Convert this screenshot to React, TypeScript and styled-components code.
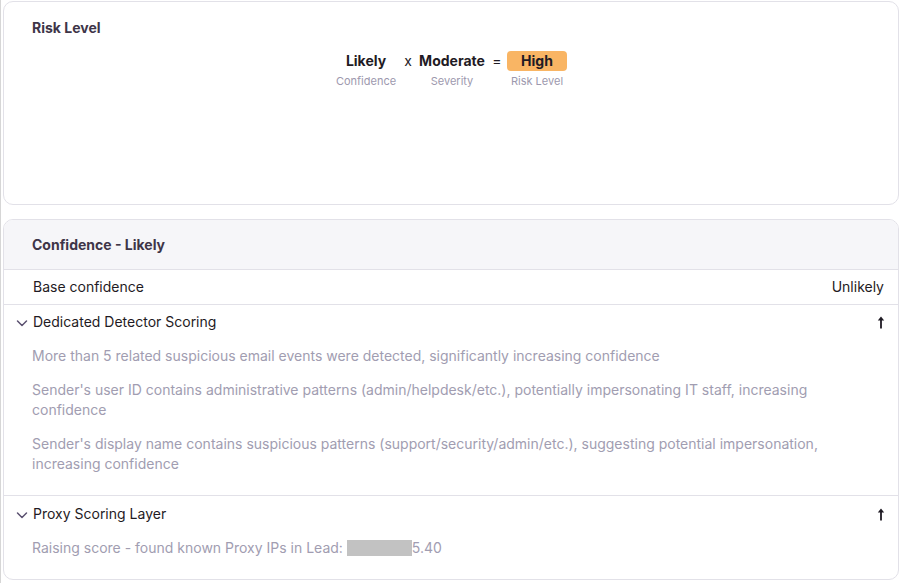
import React from "react";
import styled, { createGlobalStyle } from "styled-components";

const GlobalStyle = createGlobalStyle`
  html, body {
    margin: 0;
    padding: 0;
    background: #ffffff;
  }
  body {
    font-family: Inter, "Noto Sans", "Liberation Sans", sans-serif;
    color: #1f1b24;
    -webkit-font-smoothing: antialiased;
  }
`;

const Page = styled.div`
  display: flex;
  flex-direction: column;
  gap: 14px;
  padding: 1px 7px 0 2px;
  border-left: 1px solid #d6d6d6;
  box-sizing: border-box;
  min-height: 583px;
`;

const Card = styled.section<{ $height?: number }>`
  border: 1px solid #e2e1e8;
  border-radius: 10px;
  background: #ffffff;
  overflow: hidden;
  box-sizing: border-box;
  ${(p) => (p.$height ? `height: ${p.$height}px;` : "")}
`;

const Heading = styled.h3`
  margin: 0;
  font-size: 14px;
  line-height: 20px;
  font-weight: 700;
  color: #3e3548;
`;

const RiskBody = styled.div`
  padding: 16px 28px;
`;

const Formula = styled.div`
  display: flex;
  justify-content: center;
  align-items: flex-start;
  margin-top: 13px;
  margin-left: -7px;
`;

const Term = styled.div<{ $width: number }>`
  display: flex;
  flex-direction: column;
  align-items: center;
  width: ${(p) => p.$width}px;
`;

const TermValue = styled.div`
  font-size: 14px;
  line-height: 20px;
  font-weight: 700;
  color: #1f1b24;
`;

const Badge = styled.div`
  background: #f9b564;
  border-radius: 4px;
  width: 60px;
  text-align: center;
  font-size: 14px;
  line-height: 20px;
  font-weight: 700;
  color: #1f1b24;
`;

const TermLabel = styled.div`
  font-size: 11px;
  line-height: 14px;
  margin-top: 3px;
  color: #9d99ae;
  white-space: nowrap;
`;

const Operator = styled.div<{ $width: number; $after?: number }>`
  width: ${(p) => p.$width}px;
  margin-right: ${(p) => p.$after ?? 0}px;
  text-align: center;
  font-size: 14px;
  line-height: 20px;
  color: #1f1b24;
`;

const CardHeader = styled.div`
  background: #f6f6f9;
  padding: 15px 28px 14px;
  border-bottom: 1px solid #e2e1e8;
`;

const Row = styled.div`
  display: flex;
  justify-content: space-between;
  align-items: center;
  padding: 7px 14px 7px 29px;
  font-size: 14px;
  line-height: 20px;
  border-bottom: 1px solid #e2e1e8;
`;

const Section = styled.div<{ $last?: boolean }>`
  padding: ${(p) => (p.$last ? "8px" : "7px")} 14px 21px 12px;
  border-bottom: ${(p) => (p.$last ? "none" : "1px solid #e2e1e8")};
`;

const SectionTitle = styled.div`
  display: flex;
  align-items: center;
  font-size: 14px;
  line-height: 20px;
`;

const Chevron = styled.svg`
  width: 12px;
  height: 12px;
  margin-right: 5px;
  margin-top: 2px;
  flex-shrink: 0;
`;

const TitleText = styled.span`
  flex: 1;
`;

const UpArrow = styled.svg`
  width: 8px;
  height: 13px;
  margin-right: -1px;
`;

const Desc = styled.p`
  margin: 14px 0 0 16px;
  font-size: 14px;
  line-height: 20px;
  color: #a19db1;
`;

const Redacted = styled.span`
  display: inline-block;
  width: 65px;
  height: 16px;
  background: #c2c2c2;
  vertical-align: -3px;
`;

const ChevronIcon = () => (
  <Chevron viewBox="0 0 12 12" fill="none">
    <path d="M1.5 4 L6 8.5 L10.5 4" stroke="#5b5170" strokeWidth="1.5" strokeLinecap="round" strokeLinejoin="round" />
  </Chevron>
);

const ArrowIcon = () => (
  <UpArrow viewBox="0 0 8 13">
    <path d="M4 0.5 L7.2 4.6 L4.9 4.6 L4.9 12.5 L3.1 12.5 L3.1 4.6 L0.8 4.6 Z" fill="#1f1b24" />
  </UpArrow>
);

const detectorNotes = [
  "More than 5 related suspicious email events were detected, significantly increasing confidence",
  "Sender's user ID contains administrative patterns (admin/helpdesk/etc.), potentially impersonating IT staff, increasing confidence",
  "Sender's display name contains suspicious patterns (support/security/admin/etc.), suggesting potential impersonation, increasing confidence",
];

export default function App() {
  return (
    <>
      <GlobalStyle />
      <Page>
        <Card $height={204}>
          <RiskBody>
            <Heading>Risk Level</Heading>
            <Formula>
              <Term $width={76}>
                <TermValue>Likely</TermValue>
                <TermLabel>Confidence</TermLabel>
              </Term>
              <Operator $width={8}>x</Operator>
              <Term $width={80}>
                <TermValue>Moderate</TermValue>
                <TermLabel>Severity</TermLabel>
              </Term>
              <Operator $width={10} $after={5}>=</Operator>
              <Term $width={60}>
                <Badge>High</Badge>
                <TermLabel>Risk Level</TermLabel>
              </Term>
            </Formula>
          </RiskBody>
        </Card>

        <Card>
          <CardHeader>
            <Heading>Confidence - Likely</Heading>
          </CardHeader>
          <Row>
            <span>Base confidence</span>
            <span>Unlikely</span>
          </Row>
          <Section>
            <SectionTitle>
              <ChevronIcon />
              <TitleText>Dedicated Detector Scoring</TitleText>
              <ArrowIcon />
            </SectionTitle>
            {detectorNotes.map((note) => (
              <Desc key={note}>{note}</Desc>
            ))}
          </Section>
          <Section $last>
            <SectionTitle>
              <ChevronIcon />
              <TitleText>Proxy Scoring Layer</TitleText>
              <ArrowIcon />
            </SectionTitle>
            <Desc>
              Raising score - found known Proxy IPs in Lead: <Redacted />5.40
            </Desc>
          </Section>
        </Card>
      </Page>
    </>
  );
}
